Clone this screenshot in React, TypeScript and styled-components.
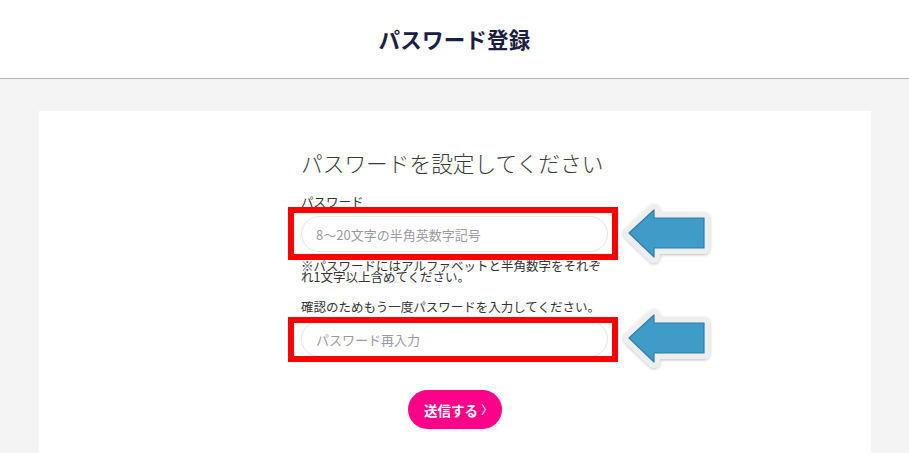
import React from "react";
import styled, { createGlobalStyle } from "styled-components";

const GlobalStyle = createGlobalStyle`
  html, body {
    margin: 0;
    padding: 0;
    background: #f4f4f4;
    font-family: "Noto Sans CJK JP", "Noto Sans", sans-serif;
    color: #333;
  }
  * { box-sizing: border-box; }
`;

interface iField {
  label: string;
  placeholder: string;
  top: number;
  bottom: number;
}

const Arrow: React.FC = () => (
  <ArrowSvg width="92" height="66" viewBox="0 0 92 66">
    <defs>
      <filter id="sh" x="-20%" y="-20%" width="140%" height="140%">
        <feDropShadow dx="0" dy="1" stdDeviation="1.5" floodColor="#000" floodOpacity="0.25" />
      </filter>
    </defs>
    <path
      d="M7 32 L32 9 L32 17 L82 17 L82 47 L32 47 L32 56 Z"
      fill="#ececec"
      stroke="#eeeeee"
      strokeWidth="12"
      strokeLinejoin="round"
      filter="url(#sh)"
    />
    <path
      d="M7 32 L32 9 L32 17 L82 17 L82 47 L32 47 L32 56 Z"
      fill="#3f9bc7"
      stroke="#2e7fa8"
      strokeWidth="1.2"
      strokeLinejoin="round"
    />
  </ArrowSvg>
);

const Field: React.FC<iField> = ({ label, placeholder, top, bottom }) => (
  <>
    <Label>{label}</Label>
    <InputWrap>
      <Input type="password" placeholder={placeholder} />
      <Mark $top={top} $bottom={bottom} />
      <Arrow />
    </InputWrap>
  </>
);

const App: React.FC = () => {
  return (
    <div>
      <GlobalStyle />
      <Header>
        <Title>パスワード登録</Title>
      </Header>
      <Main>
        <Card>
          <Form>
            <Heading>パスワードを設定してください</Heading>
            <Field label="パスワード" placeholder="8〜20文字の半角英数字記号" top={9} bottom={8} />
            <Note>※パスワードにはアルファベットと半角数字をそれぞれ1文字以上含めてください。</Note>
            <Field
              label="確認のためもう一度パスワードを入力してください。"
              placeholder="パスワード再入力"
              top={4}
              bottom={5}
            />
            <ButtonRow>
              <Submit>
                送信する<Chevron>〉</Chevron>
              </Submit>
            </ButtonRow>
          </Form>
        </Card>
      </Main>
    </div>
  );
};
export default App;

const Header = styled.header`
  height: 79px;
  background: #fff;
  border-bottom: 1px solid #b4b4b4;
  display: flex;
  align-items: center;
  justify-content: center;
  padding-bottom: 2px;
`;
const Title = styled.h1`
  margin: 0;
  font-size: 21.5px;
  font-weight: 700;
  color: #1b2040;
  letter-spacing: 0.2px;
`;
const Main = styled.main`
  padding-top: 32px;
`;
const Card = styled.section`
  width: 832px;
  margin: 0 auto;
  min-height: 342px;
  background: #fff;
  padding-top: 36px;
`;
const Form = styled.div`
  width: 307px;
  margin: 0 auto;
  display: flex;
  flex-direction: column;
`;
const Heading = styled.h2`
  margin: 0 0 15px;
  font-size: 21.7px;
  line-height: 32px;
  font-weight: 300;
  color: #3a3a3a;
  white-space: nowrap;
`;
const Label = styled.div`
  font-size: 12.5px;
  line-height: 16px;
  color: #333;
  white-space: nowrap;
  margin-bottom: 6px;
`;
const InputWrap = styled.div`
  position: relative;
`;
const Input = styled.input`
  display: block;
  width: 100%;
  height: 36px;
  border: 1px solid #e6e6e6;
  border-radius: 18px;
  padding: 0 14px;
  font-family: inherit;
  font-size: 13px;
  color: #333;
  background: #fff;
  outline: none;
  &::placeholder {
    color: #9a9aa2;
  }
`;
const Mark = styled.div<{ $top: number; $bottom: number }>`
  position: absolute;
  left: -13px;
  right: -10px;
  top: -${(p) => p.$top}px;
  bottom: -${(p) => p.$bottom}px;
  border: 6px solid #ff0000;
  pointer-events: none;
`;
const ArrowSvg = styled.svg`
  position: absolute;
  left: 321px;
  top: 50%;
  transform: translateY(-50%);
`;
const Note = styled.p`
  margin: 8px 0 17px;
  font-size: 12.5px;
  line-height: 11px;
  color: #333;
`;
const ButtonRow = styled.div`
  display: flex;
  justify-content: center;
  margin-top: 33px;
`;
const Submit = styled.button`
  width: 94px;
  height: 39px;
  border: none;
  border-radius: 20px;
  background: #ff0088;
  color: #fff;
  font-family: inherit;
  font-size: 13.5px;
  font-weight: 700;
  display: flex;
  align-items: center;
  justify-content: center;
  padding: 0 0 0 8px;
  cursor: pointer;
`;
const Chevron = styled.span`
  font-weight: 400;
  font-size: 12px;
  margin-left: 3px;
`;
